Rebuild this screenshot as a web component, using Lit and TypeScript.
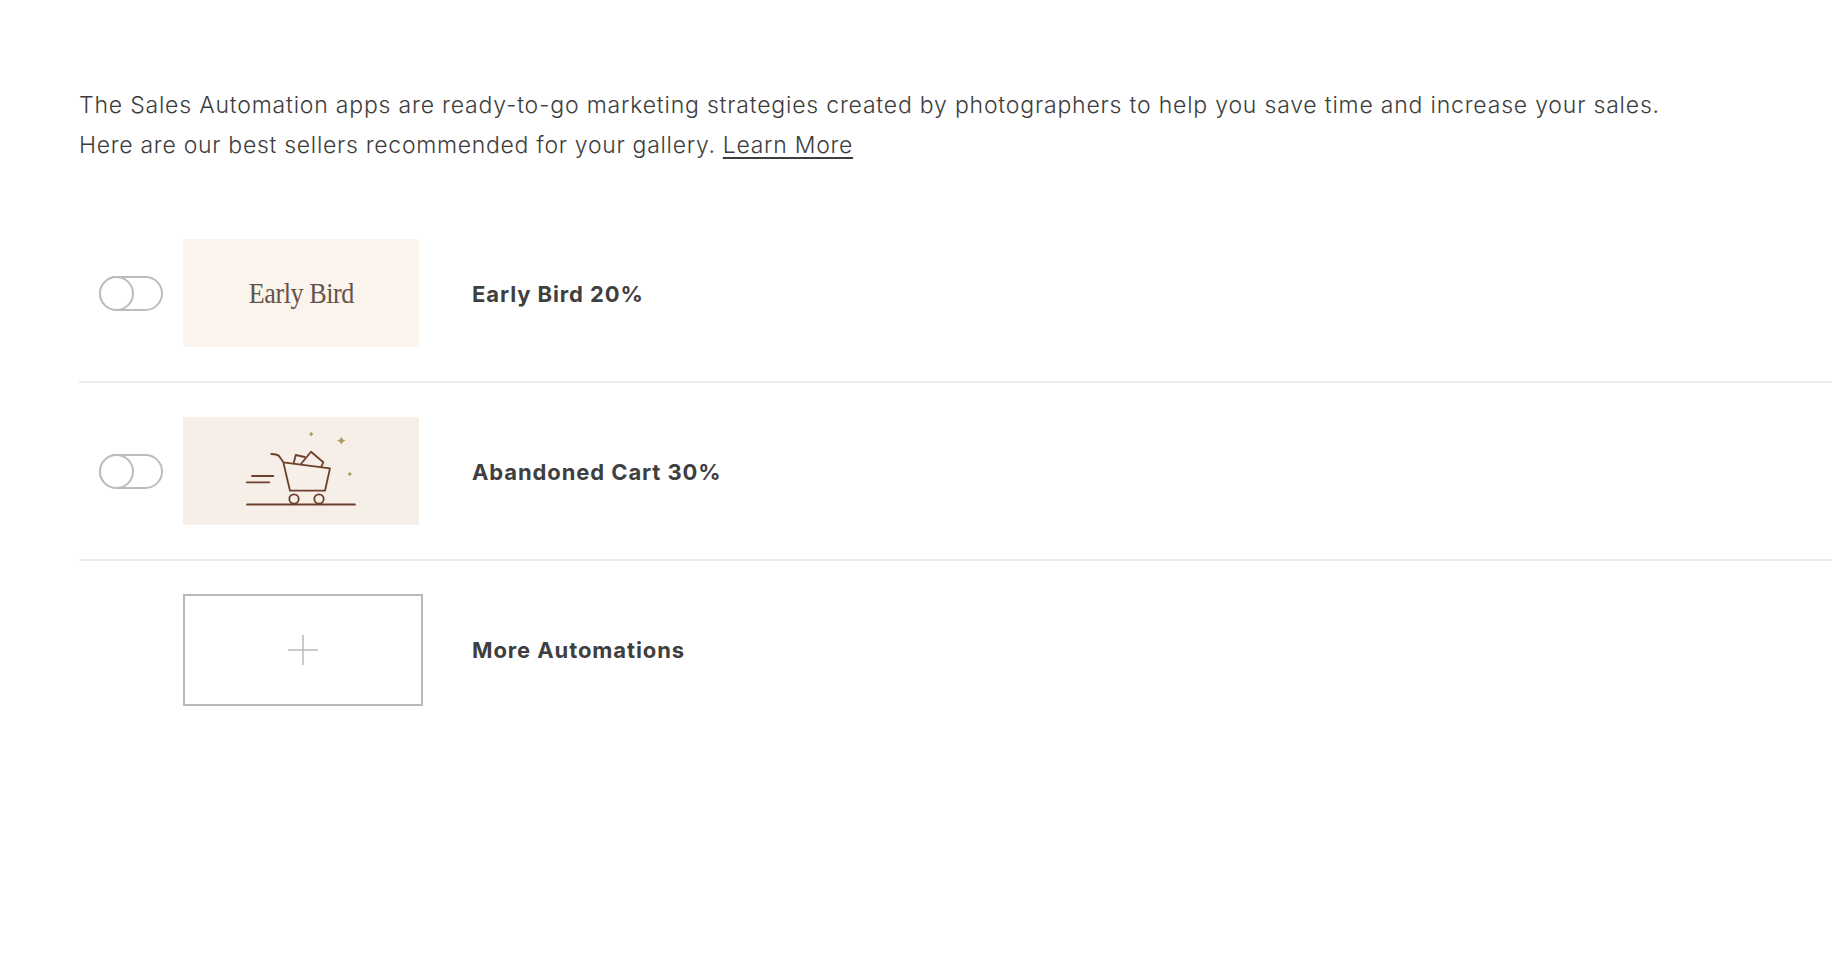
import { LitElement, html, css } from "lit";
import { customElement } from "lit/decorators.js";

@customElement("app-root")
export class AppRoot extends LitElement {
  static styles = css`
    :host { display: block; background: #fff; height: 954px; overflow: hidden; font-family: "Inter", "Liberation Sans", sans-serif; color: #3f3f3f; }
    .wrap { padding: 85px 0 0 79px; display: flex; flex-direction: column; }
    .intro { margin: 0 0 40px; font-size: 23px; line-height: 40px; font-weight: 300; letter-spacing: 0.8px; color: #3d3d3d; white-space: nowrap; }
    .intro .second { letter-spacing: 0.7px; }
    .intro a { color: inherit; text-decoration: underline; text-underline-offset: 4px; }
    .row { display: flex; align-items: center; height: 176px; border-bottom: 2px solid #ececec; padding-left: 20px; }
    .row.last { border-bottom: 0; height: 174px; padding-left: 104px; padding-top: 33px; align-items: flex-start; }
    .toggle { position: relative; width: 64px; height: 35px; box-sizing: border-box; border: 2px solid #bcbcbc; border-radius: 18px; flex: none; margin-right: 20px; }
    .toggle::before { content: ""; position: absolute; left: -2px; top: -2px; width: 35px; height: 35px; box-sizing: border-box; border: 2px solid #bcbcbc; border-radius: 50%; background: #fff; }
    .thumb { width: 236px; height: 108px; flex: none; display: flex; align-items: center; justify-content: center; }
    .thumb.bird { background: #faf4ed; font-family: "Liberation Serif", serif; font-size: 29px; letter-spacing: -0.5px; color: #65534a; }
    .bird span { display: block; transform: scaleX(0.9); }
    .thumb.cart { background: #f5efe8; }
    .thumb svg { display: block; }
    .name { margin-left: 53px; padding-top: 2px; font-size: 22px; font-weight: 650; letter-spacing: 0.9px; color: #3f3f3f; }
    .add { width: 240px; height: 112px; box-sizing: border-box; border: 2px solid #b8b8b8; flex: none; display: flex; align-items: center; justify-content: center; }
    .last .name { margin-left: 49px; padding-top: 0; line-height: 112px; }
  `;

  render() {
    return html`
      <div class="wrap">
        <p class="intro">The Sales Automation apps are ready-to-go marketing strategies created by photographers to help you save time and increase your sales.<br /><span class="second">Here are our best sellers recommended for your gallery. <a href="#">Learn More</a></span></p>
        <div class="row">
          <span class="toggle"></span>
          <div class="thumb bird"><span>Early Bird</span></div>
          <span class="name">Early Bird 20%</span>
        </div>
        <div class="row">
          <span class="toggle"></span>
          <div class="thumb cart">
            <svg width="236" height="108" viewBox="0 0 236 108" fill="none" stroke="#6e3f2a" stroke-width="1.8" stroke-linejoin="round" stroke-linecap="round">
              <path d="M64 87.5H172" />
              <circle cx="111" cy="82" r="4.7" />
              <circle cx="136" cy="82" r="4.7" />
              <path d="M69 59H90.3M63.7 65.3H86.3" />
              <path d="M88.3 37L93 37.5Q96 38 97.5 41L100.3 45.3L107 73.7H142L147 51.3L100.3 45.3" />
              <path d="M110.7 46.3L112.7 38L121.7 40" />
              <path d="M118 47L128 34.7L140.3 45.3L138.3 49.7" />
              <g fill="#ad9a5c" stroke="none">
                <path d="M128.3 14.5Q128.8 16.5 130.8 17Q128.8 17.5 128.3 19.5Q127.8 17.5 125.8 17Q127.8 16.5 128.3 14.5Z" />
                <path d="M158.3 19.3Q159 23 162.7 23.7Q159 24.4 158.3 28.1Q157.6 24.4 153.9 23.7Q157.6 23 158.3 19.3Z" />
                <path d="M166.7 54.5Q167.2 56.5 169.2 57Q167.2 57.5 166.7 59.5Q166.2 57.5 164.2 57Q166.2 56.5 166.7 54.5Z" />
              </g>
            </svg>
          </div>
          <span class="name">Abandoned Cart 30%</span>
        </div>
        <div class="row last">
          <div class="add">
            <svg width="32" height="32" viewBox="0 0 32 32" stroke="#bbb" stroke-width="1.5"><path d="M16 1V31M1 16H31" /></svg>
          </div>
          <span class="name">More Automations</span>
        </div>
      </div>
    `;
  }
}
